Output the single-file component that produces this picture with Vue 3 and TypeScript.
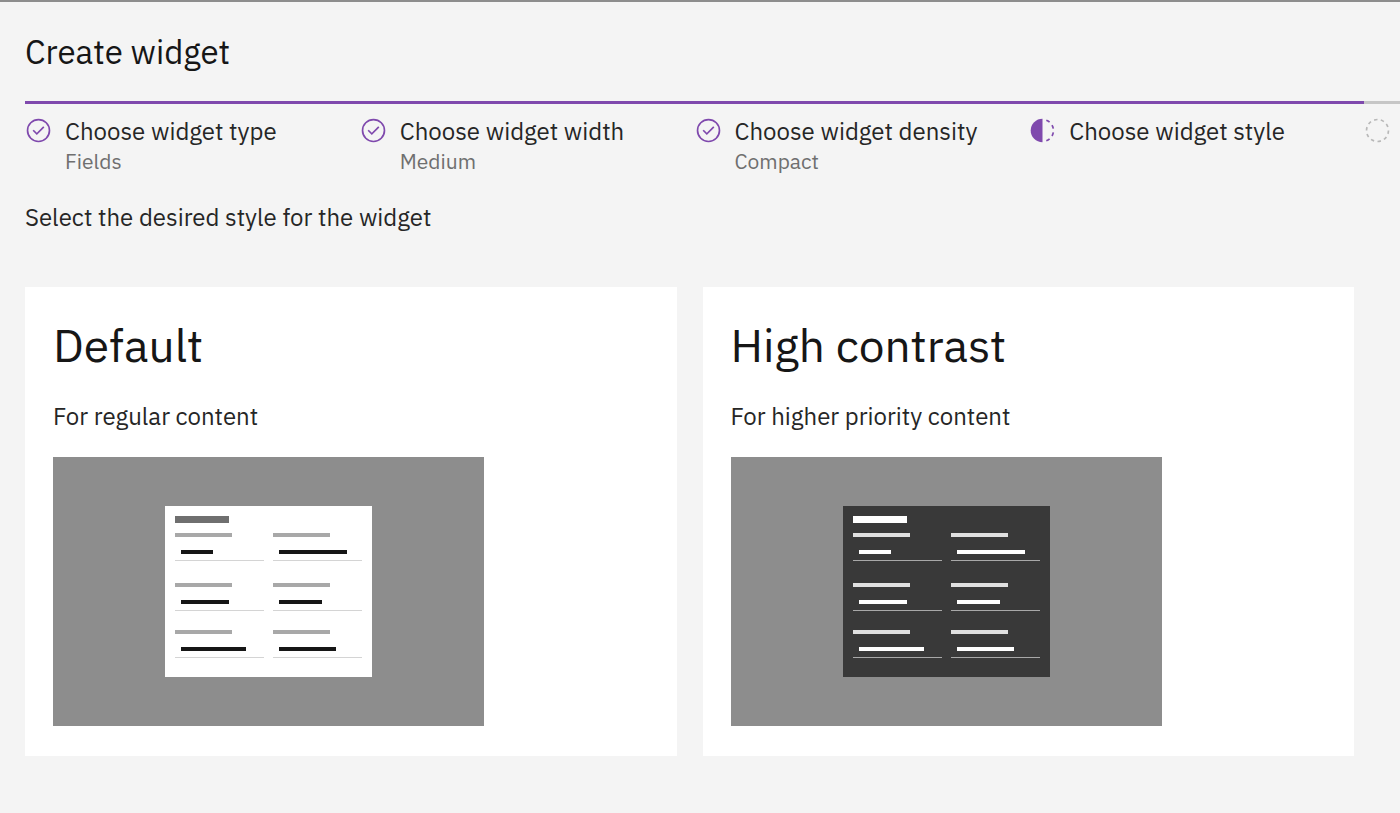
<script setup lang="ts">
import { ref } from 'vue'

type StepState = 'complete' | 'current' | 'incomplete'

interface Step {
  label: string
  detail: string
  state: StepState
}

interface PreviewRow {
  y: number
  left: number
  right: number
}

interface StyleOption {
  id: string
  title: string
  description: string
}

const steps: Step[] = [
  { label: 'Choose widget type', detail: 'Fields', state: 'complete' },
  { label: 'Choose widget width', detail: 'Medium', state: 'complete' },
  { label: 'Choose widget density', detail: 'Compact', state: 'complete' },
  { label: 'Choose widget style', detail: '', state: 'current' },
  { label: '', detail: '', state: 'incomplete' },
]

const options: StyleOption[] = [
  { id: 'default', title: 'Default', description: 'For regular content' },
  { id: 'contrast', title: 'High contrast', description: 'For higher priority content' },
]

const rows: PreviewRow[] = [
  { y: 76, left: 32, right: 68 },
  { y: 126, left: 48, right: 43 },
  { y: 173, left: 65, right: 57 },
]

const selected = ref('')
</script>

<template>
  <main class="page">
    <h1 class="title">Create widget</h1>

    <ol class="steps">
      <li v-for="(step, i) in steps" :key="i" class="step" :class="step.state">
        <button type="button" class="step-button" :aria-label="step.label || 'Next step'">
          <svg class="step-icon" viewBox="0 0 32 32" aria-hidden="true">
            <template v-if="step.state === 'complete'">
              <circle cx="16" cy="16" r="13" fill="none" stroke="currentColor" stroke-width="2" />
              <path d="M14 21.414 9 16.413 10.413 15 14 18.586 21.585 11 23 12.415z" fill="currentColor" />
            </template>
            <template v-else-if="step.state === 'current'">
              <path d="M16 2a14 14 0 0 0 0 28z" fill="currentColor" />
              <path
                d="M23.764 6.859l1.285-1.531A13.976 13.976 0 0 0 20.867 2.887l-.683 1.878A11.973 11.973 0 0 1 23.764 6.859zM27.81 14l1.968-.413A13.889 13.889 0 0 0 28.14 9.046L26.409 10A12.52 12.52 0 0 1 27.81 14zM20.184 27.235l.683 1.878a13.976 13.976 0 0 0 4.182-2.441l-1.285-1.531A11.973 11.973 0 0 1 20.184 27.235zM26.409 22L28.14 23a14.14 14.14 0 0 0 1.638-4.587L27.81 18.066A12.152 12.152 0 0 1 26.409 22z"
                fill="currentColor"
              />
            </template>
            <path
              v-else
              d="M7.7 4.7a14.7 14.7 0 0 0-3 3.1L6.3 9a13.26 13.26 0 0 1 2.6-2.7zM4.6 12.3l-1.9-.6A12.51 12.51 0 0 0 2 16H4A11.48 11.48 0 0 1 4.6 12.3zM2.7 20.4a14.4 14.4 0 0 0 2 3.9l1.6-1.2a12.89 12.89 0 0 1-1.7-3.3zM7.8 27.3a14.4 14.4 0 0 0 3.9 2l.6-1.9A12.89 12.89 0 0 1 9 25.7zM11.7 2.7l.6 1.9A11.48 11.48 0 0 1 16 4V2A12.51 12.51 0 0 0 11.7 2.7zM24.2 27.3a15.18 15.18 0 0 0 3.1-3.1L25.7 23A11.53 11.53 0 0 1 23 25.7zM27.4 19.7l1.9.6A15.47 15.47 0 0 0 30 16H28A11.48 11.48 0 0 1 27.4 19.7zM29.2 11.6a14.4 14.4 0 0 0-2-3.9L25.6 8.9a12.89 12.89 0 0 1 1.7 3.3zM24.1 4.6a14.4 14.4 0 0 0-3.9-2l-.6 1.9a12.89 12.89 0 0 1 3.3 1.7zM20.3 29.3l-.6-1.9A11.48 11.48 0 0 1 16 28v2A21.42 21.42 0 0 0 20.3 29.3z"
              fill="currentColor"
            />
          </svg>
          <span class="step-text">
            <span class="step-label">{{ step.label }}</span>
            <span class="step-detail">{{ step.detail }}</span>
          </span>
        </button>
      </li>
    </ol>

    <p class="prompt">Select the desired style for the widget</p>

    <div class="tiles">
      <button
        v-for="option in options"
        :key="option.id"
        type="button"
        class="tile"
        :aria-pressed="selected === option.id"
        @click="selected = option.id"
      >
        <span class="tile-title">{{ option.title }}</span>
        <span class="tile-description">{{ option.description }}</span>
        <svg class="preview" :class="option.id" viewBox="0 0 431 269" aria-hidden="true">
          <rect class="backdrop" width="431" height="269" />
          <rect class="panel" x="112" y="49" width="207" height="171" />
          <rect class="heading" x="122" y="59" width="54" height="7" />
          <g v-for="row in rows" :key="row.y">
            <rect class="label" x="122" :y="row.y" width="57" height="4" />
            <rect class="value" x="128" :y="row.y + 17" :width="row.left" height="4" />
            <rect class="rule" x="122" :y="row.y + 27" width="89" height="1" />
            <rect class="label" x="220" :y="row.y" width="57" height="4" />
            <rect class="value" x="226" :y="row.y + 17" :width="row.right" height="4" />
            <rect class="rule" x="220" :y="row.y + 27" width="89" height="1" />
          </g>
        </svg>
      </button>
    </div>
  </main>
</template>

<style>
body {
  margin: 0;
  background: #f4f4f4;
}
</style>

<style scoped>
.page {
  box-sizing: border-box;
  min-height: 100vh;
  padding: 28px 0 56px 25px;
  border-top: 2px solid #8d8d8d;
  overflow: hidden;
  background: #f4f4f4;
  color: #161616;
  font-family: 'IBM Plex Sans', 'Open Sans', 'Noto Sans', sans-serif;
}

button {
  border: 0;
  padding: 0;
  color: inherit;
  font-family: inherit;
  text-align: left;
  cursor: pointer;
}

.title {
  margin: 0;
  font-size: 33px;
  line-height: 44px;
  font-weight: 400;
}

.steps {
  display: flex;
  margin: 27px 0 0;
  padding: 0;
  list-style: none;
}

/* Four steps fill the row and the fifth peeks in at the right edge. */
.step {
  flex: 0 0 calc((100% - 36px) / 4);
  border-top: 3px solid #7f49ad;
  color: #7f49ad;
}

.step.incomplete {
  border-top-color: #c6c6c6;
  color: #b8b8b8;
}

.step-button {
  display: flex;
  gap: 13px;
  width: 100%;
  padding-top: 12px;
  background: transparent;
}

.step-icon {
  flex: none;
  width: 27px;
  height: 27px;
  margin-top: 1px;
}

.step-text {
  display: flex;
  flex-direction: column;
}

.step-label {
  min-height: 30px;
  color: #262626;
  font-size: 24px;
  line-height: 30px;
  white-space: nowrap;
}

.step-detail {
  min-height: 30px;
  color: #6f6f6f;
  font-size: 21px;
  line-height: 30px;
}

.prompt {
  margin: 26px 0 0;
  color: #262626;
  font-size: 24px;
  line-height: 30px;
}

.tiles {
  display: grid;
  grid-template-columns: 1fr 1fr;
  gap: 26px;
  margin: 55px 46px 0 0;
}

.tile {
  display: flex;
  flex-direction: column;
  align-items: flex-start;
  padding: 28px 28px 30px;
  background: #ffffff;
}

.tile-title {
  font-size: 46px;
  line-height: 60px;
}

.tile-description {
  margin-top: 26px;
  color: #262626;
  font-size: 24px;
  line-height: 30px;
}

.preview {
  display: block;
  width: 100%;
  max-width: 431px;
  margin-top: 26px;
}

.backdrop {
  fill: #8d8d8d;
}

.default .panel {
  fill: #ffffff;
}

.default .heading {
  fill: #6f6f6f;
}

.default .label {
  fill: #a8a8a8;
}

.default .value {
  fill: #161616;
}

.default .rule {
  fill: #d4d4d4;
}

.contrast .panel {
  fill: #393939;
}

.contrast .heading,
.contrast .value {
  fill: #ffffff;
}

.contrast .label {
  fill: #e0e0e0;
}

.contrast .rule {
  fill: #a8a8a8;
}
</style>
